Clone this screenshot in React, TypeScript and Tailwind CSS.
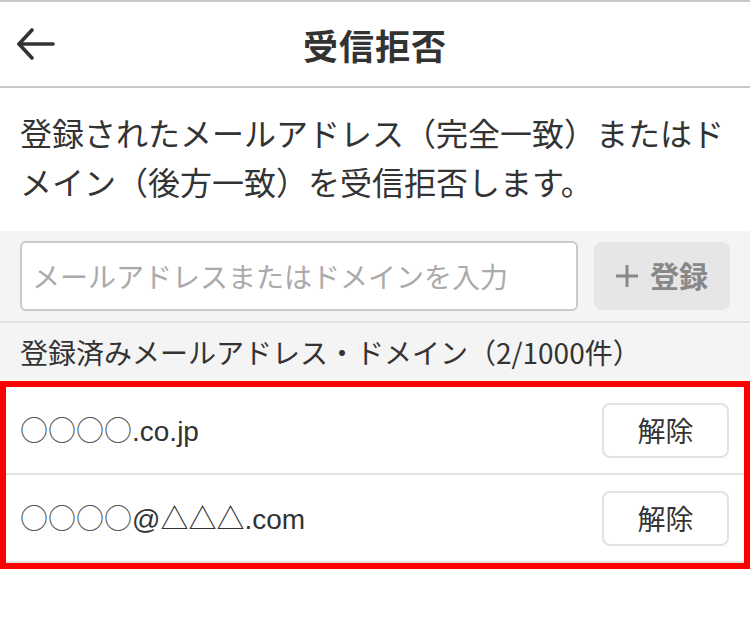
import React from "react";

const jp = "font-['Noto_Sans_CJK_JP',sans-serif]";
const latin = "font-['Liberation_Sans','Noto_Sans_CJK_JP',sans-serif]";

const entries = [
  { mask: "○○○○", rest: ".co.jp" },
  { mask: "○○○○", rest: "@△△△.com" },
];

export default function App() {
  return (
    <div className={`w-[750px] h-[640px] bg-white text-[#333] ${jp}`}>
      {/* Header */}
      <header className="relative h-[88px] border-t-2 border-b-2 border-[#c8c8c8] flex items-center justify-center">
        <svg
          className="absolute left-[16px] top-[24px]"
          width="40"
          height="36"
          viewBox="0 0 40 36"
          fill="none"
          stroke="#333"
          strokeWidth="3.6"
          strokeLinecap="round"
          strokeLinejoin="round"
        >
          <path d="M37 18H3" />
          <path d="M16 4L3 18l13 14" />
        </svg>
        <h1 className="text-[35px] font-bold leading-none tracking-[1px]">受信拒否</h1>
      </header>

      {/* Description */}
      <p className="px-5 pt-5 pb-[25px] text-[32px] leading-[49px]">
        登録されたメールアドレス（完全一致）またはドメイン（後方一致）を受信拒否します。
      </p>

      {/* Input area */}
      <div className="bg-[#f4f4f4]">
        <div className="flex items-center gap-4 px-5 py-[10px]">
          <div className="flex-1 h-[70px] bg-white border-2 border-[#cbcbcb] rounded-md flex items-center px-[10px]">
            <span className="text-[28px] text-[#aaa]">メールアドレスまたはドメインを入力</span>
          </div>
          <button className="w-[136px] h-[68px] rounded-lg bg-[#e6e6e6] text-[#888] flex items-center justify-center gap-3">
            <svg width="22" height="22" viewBox="0 0 22 22" stroke="#888" strokeWidth="3">
              <path d="M11 0v22M0 11h22" />
            </svg>
            <span className="text-[29px] font-bold">登録</span>
          </button>
        </div>
        <div className="border-t-2 border-[#e2e2e2] h-[60px] flex items-center px-5">
          <span className="text-[28px]">登録済みメールアドレス・ドメイン（2/1000件）</span>
        </div>
      </div>

      {/* Registered list */}
      <div className="border-[6px] border-[#ff0000]">
        {entries.map((e) => (
          <div
            key={e.rest}
            className="h-[88px] border-b-2 border-[#e2e2e2] flex items-center justify-between pl-[14px] pr-[15px]"
          >
            <span className={`text-[28px] ${latin}`}>
              <span className={`${jp} text-[#555]`}>{e.mask}</span>
              {e.rest}
            </span>
            <button className={`w-[127px] h-[55px] rounded-lg border-2 border-[#e2e2e2] bg-white text-[28px] ${jp}`}>
              解除
            </button>
          </div>
        ))}
      </div>
    </div>
  );
}
